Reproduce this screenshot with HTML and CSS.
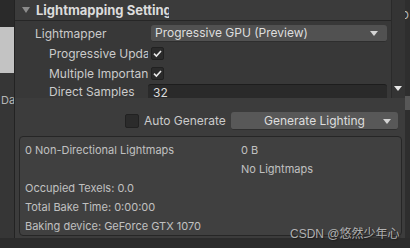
FILE: index.html
```html
<!DOCTYPE html>
<html lang="en">
<head>
    <meta charset="UTF-8">
    <meta name="viewport" content="width=device-width, initial-scale=1.0">
    <title>Lighting</title>
    <link rel="stylesheet" href="styles.css">
</head>
<body>
    <div class="screen">
        <div class="side-left">
            <div class="side-top"></div>
            <div class="side-block"></div>
            <div class="side-text">Da</div>
        </div>

        <div class="inspector">
            <div class="upper">
                <div class="settings">
                    <div class="foldout">
                        <span class="tri"></span>
                        <span class="foldout-title">Lightmapping Settings</span>
                    </div>

                    <div class="row">
                        <span class="label">Lightmapper</span>
                        <div class="popup">Progressive GPU (Preview)<span class="arrow"></span></div>
                    </div>

                    <div class="row indent">
                        <span class="label">Progressive Updates</span>
                        <span class="checkbox checked">
                            <svg width="11" height="11" viewBox="0 0 11 11"><path d="M2 5.6 L4.4 8 L9 3" fill="none" stroke="#e8e8e8" stroke-width="1.6"/></svg>
                        </span>
                    </div>

                    <div class="row indent">
                        <span class="label">Multiple Importance Sampling</span>
                        <span class="checkbox checked">
                            <svg width="11" height="11" viewBox="0 0 11 11"><path d="M2 5.6 L4.4 8 L9 3" fill="none" stroke="#e8e8e8" stroke-width="1.6"/></svg>
                        </span>
                    </div>

                    <div class="row indent last">
                        <span class="label">Direct Samples</span>
                        <div class="field">32</div>
                    </div>
                </div>
                <div class="scroll-strip"><span class="arrow"></span></div>
            </div>

            <div class="lower">
                <div class="generate-row">
                    <span class="checkbox big"></span>
                    <span class="auto-label">Auto Generate</span>
                    <div class="button">Generate Lighting<span class="arrow"></span></div>
                </div>

                <div class="stats">
                    <span>0 Non-Directional Lightmaps</span><span>0 B</span>
                    <span></span><span>No Lightmaps</span>
                    <span>Occupied Texels: 0.0</span><span></span>
                    <span>Total Bake Time: 0:00:00</span><span></span>
                    <span>Baking device: GeForce GTX 1070</span><span></span>
                </div>
            </div>
        </div>

        <div class="side-right">
            <div class="side-right-text">D</div>
            <div class="side-right-chunk"></div>
        </div>
    </div>

    <div class="watermark">CSDN @悠然少年心</div>
</body>
</html>
```

FILE: styles.css
```css
body {
    margin: 0;
    background-color: #2c2c2c;
    font-family: Inter, "Noto Sans", sans-serif;
    font-size: 12px;
    color: #cbcbcb;
    width: 410px;
    height: 248px;
    overflow: hidden;
    position: relative;
}
.screen {
    display: flex;
    height: 238px;
}

/* left neighbour window */
.side-left {
    width: 14px;
    display: flex;
    flex-direction: column;
    background-color: #363636;
    overflow: hidden;
}
.side-top {
    height: 27px;
    background-color: #2a2a2a;
}
.side-block {
    height: 46px;
    background-color: #c3c3c3;
}
.side-text {
    margin-top: 20px;
    margin-left: 1px;
    font-size: 11px;
    color: #b5b5b5;
    white-space: nowrap;
}

/* main panel */
.inspector {
    width: 390px;
    display: flex;
    flex-direction: column;
    border-left: 1px solid #232323;
}
.upper {
    display: flex;
    height: 98px;
    background-color: #383838;
}
.settings {
    width: 377px;
}
.foldout {
    height: 20px;
    display: flex;
    align-items: center;
    background-color: #3b3b3b;
    border-bottom: 1px solid #262626;
}
.tri {
    width: 0;
    height: 0;
    margin-left: 7px;
    margin-right: 6px;
    border-left: 4px solid transparent;
    border-right: 4px solid transparent;
    border-top: 6px solid #8c8c8c;
}
.foldout-title {
    width: 133px;
    overflow: hidden;
    white-space: nowrap;
    font-weight: bold;
    font-size: 13px;
    color: #dcdcdc;
}
.row {
    height: 20px;
    display: flex;
    align-items: center;
}
.row:nth-child(2) {
    margin-top: 2px;
}
.row.last {
    height: 16px;
    align-items: flex-start;
    margin-top: 1px;
}
.label {
    width: 116px;
    padding-left: 20px;
    overflow: hidden;
    white-space: nowrap;
    color: #cbcbcb;
}
.indent .label {
    width: 99px;
    padding-left: 34px;
}
.row.last .label {
    line-height: 16px;
}
.popup {
    position: relative;
    width: 232px;
    height: 16px;
    line-height: 16px;
    padding-left: 4px;
    background-color: #515151;
    border-radius: 3px;
    border-bottom: 1px solid #2e2e2e;
    color: #dedede;
}
.arrow {
    position: absolute;
    right: 9px;
    top: 6px;
    width: 0;
    height: 0;
    border-left: 4px solid transparent;
    border-right: 4px solid transparent;
    border-top: 5px solid #d4d4d4;
}
.checkbox {
    width: 11px;
    height: 11px;
    margin-left: 3px;
    background-color: #2b2b2b;
    border: 1px solid #212121;
    border-radius: 2px;
    display: flex;
}
.field {
    width: 234px;
    height: 15px;
    line-height: 15px;
    padding-left: 5px;
    background-color: #2a2a2a;
    border-top: 1px solid #1d1d1d;
    border-radius: 3px 3px 0 0;
    color: #dcdcdc;
}
.scroll-strip {
    position: relative;
    width: 13px;
    background-color: #343434;
    border-left: 1px solid #2a2a2a;
}
.scroll-strip .arrow {
    right: 3px;
    top: 86px;
    border-top-color: #e6e6e6;
}

/* bottom area */
.lower {
    flex: 1;
    background-color: #3c3c3c;
    padding: 14px 3px 2px 4px;
}
.generate-row {
    display: flex;
    align-items: center;
    height: 17px;
}
.checkbox.big {
    width: 12px;
    height: 12px;
    margin-left: 106px;
}
.auto-label {
    margin-left: 5px;
    width: 87px;
    color: #cbcbcb;
}
.button {
    position: relative;
    width: 167px;
    height: 17px;
    line-height: 17px;
    text-align: center;
    background-color: #585858;
    border-radius: 3px;
    border-bottom: 1px solid #2f2f2f;
    color: #dedede;
}
.button .arrow {
    right: 7px;
    top: 7px;
}
.stats {
    margin-top: 7px;
    height: 92px;
    display: grid;
    grid-template-columns: 216px 1fr;
    grid-auto-rows: 19px;
    align-items: center;
    padding: 3px 5px;
    background-color: #404040;
    border: 1px solid #262626;
    border-radius: 4px;
    font-size: 11px;
    color: #c0c0c0;
}

/* right neighbour */
.side-right {
    flex: 1;
    display: flex;
    flex-direction: column;
    background-color: #2e2e2e;
    overflow: hidden;
}
.side-right-text {
    margin-top: 8px;
    margin-left: -4px;
    font-size: 11px;
    color: #bdbdbd;
}
.side-right-chunk {
    margin-top: 74px;
    height: 14px;
    background-color: #575757;
}

.watermark {
    position: absolute;
    left: 290px;
    top: 224px;
    font-family: "Liberation Sans", "Noto Sans CJK SC", sans-serif;
    font-size: 12px;
    color: rgba(220, 220, 220, 0.75);
    text-shadow: 1px 1px 1px #1e1e1e;
    white-space: nowrap;
}
```
